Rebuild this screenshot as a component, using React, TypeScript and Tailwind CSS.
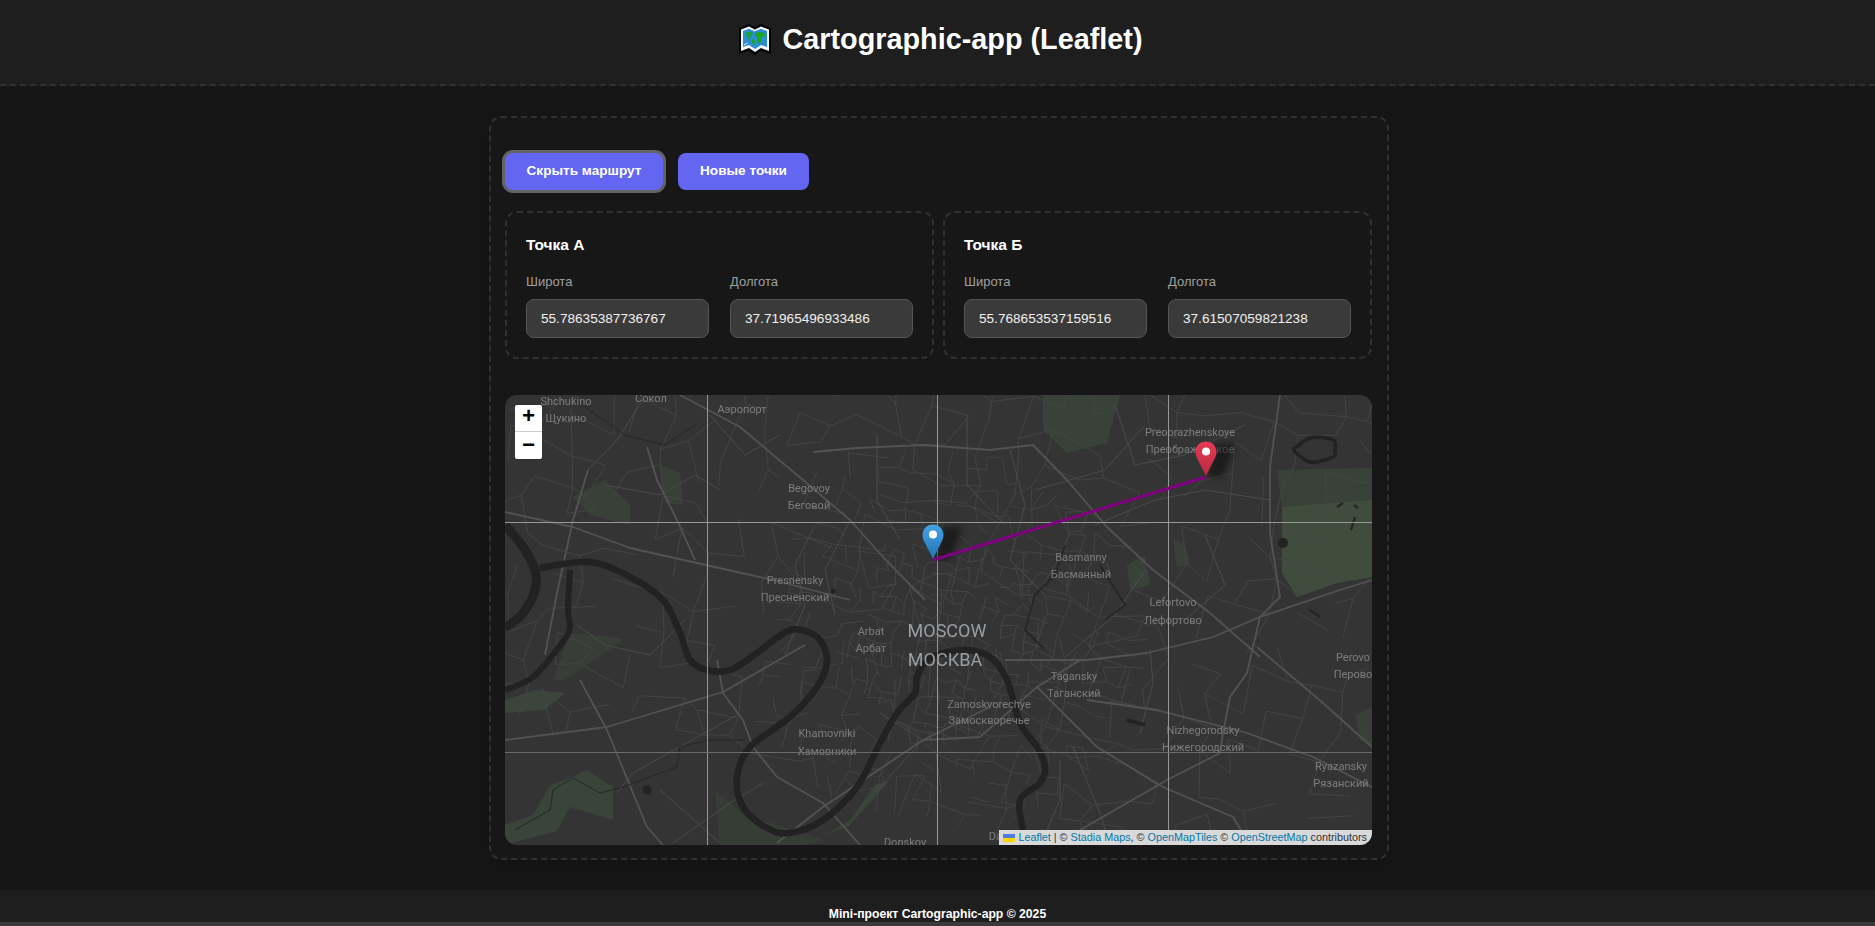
import { useState } from 'react';

// deterministic street filler so the map texture stays the same on every render
function makeRandom(seed: number) {
  let s = seed;
  return () => {
    s = (s * 16807) % 2147483647;
    return s / 2147483647;
  };
}

// jittered lattice, keeps only the edges that pass the filter
function buildLattice(seed: number, cell: number, chance: number, keep: (x: number, y: number) => boolean) {
  const rnd = makeRandom(seed);
  const cols = Math.ceil(900 / cell);
  const rows = Math.ceil(520 / cell);
  const pts: [number, number][][] = [];
  for (let i = 0; i < cols; i++) {
    pts[i] = [];
    for (let j = 0; j < rows; j++) {
      const x = i * cell + (rnd() - 0.5) * cell * 0.7 - j * cell * 0.22;
      const y = j * cell + (rnd() - 0.5) * cell * 0.7 + i * cell * 0.24 - 200;
      pts[i][j] = [x + 60, y];
    }
  }
  let d = '';
  for (let i = 0; i < cols - 1; i++) {
    for (let j = 0; j < rows - 1; j++) {
      const [x, y] = pts[i][j];
      if (!keep(x, y)) continue;
      if (rnd() < chance) d += `M${x.toFixed(1)} ${y.toFixed(1)}L${pts[i + 1][j][0].toFixed(1)} ${pts[i + 1][j][1].toFixed(1)}`;
      if (rnd() < chance) d += `M${x.toFixed(1)} ${y.toFixed(1)}L${pts[i][j + 1][0].toFixed(1)} ${pts[i][j + 1][1].toFixed(1)}`;
    }
  }
  return d;
}

const near = (x: number, y: number, r: number) => Math.hypot(x - 440, y - 240) < r;

const sideStreets = buildLattice(917, 30, 0.5, () => true);
const cityStreets = buildLattice(4242, 11, 0.55, (x, y) => near(x, y, 100));
const midStreets = buildLattice(77, 17, 0.45, (x, y) => near(x, y, 190) && !near(x, y, 95));

// catmull-rom through the points, used for the rivers
function smooth(points: number[][]) {
  let d = `M${points[0][0]} ${points[0][1]}`;
  for (let i = 0; i < points.length - 1; i++) {
    const p0 = points[Math.max(i - 1, 0)];
    const p1 = points[i];
    const p2 = points[i + 1];
    const p3 = points[Math.min(i + 2, points.length - 1)];
    const c1x = p1[0] + (p2[0] - p0[0]) / 6;
    const c1y = p1[1] + (p2[1] - p0[1]) / 6;
    const c2x = p2[0] - (p3[0] - p1[0]) / 6;
    const c2y = p2[1] - (p3[1] - p1[1]) / 6;
    d += `C${c1x.toFixed(1)} ${c1y.toFixed(1)} ${c2x.toFixed(1)} ${c2y.toFixed(1)} ${p2[0]} ${p2[1]}`;
  }
  return d;
}

const moskva = smooth([
  [35, 173], [85, 167], [125, 182], [158, 205], [175, 238], [185, 265], [202, 275], [225, 275], [252, 258], [285, 235],
  [312, 242], [322, 265], [312, 292], [285, 322], [245, 352], [232, 382], [238, 412], [262, 433], [285, 438], [318, 425],
  [352, 392], [375, 348], [392, 318], [410, 298], [412, 282], [425, 263], [458, 255], [485, 262], [502, 285], [515, 328],
  [532, 352], [540, 372], [535, 388], [515, 405], [518, 435], [522, 455],
]);
const westBend = smooth([[0, 130], [18, 152], [30, 175], [30, 195], [18, 218], [0, 233]]);
const westChannel = smooth([[65, 175], [63, 215], [65, 232], [57, 248], [28, 282], [0, 295]]);
const lake = smooth([[788, 55], [805, 43], [828, 45], [830, 55], [828, 62], [805, 67], [788, 55]]);

const majorRoads = [
  'M175 0L235 32L298 85L345 125L378 162L420 205',
  'M0 117L68 132L125 153L232 177L268 185L345 205',
  'M308 57L352 53L418 50L485 55L528 50L562 85L602 132L648 175L705 218L755 262',
  'M500 265L582 265L642 258L708 242L755 222L835 195L867 185',
  'M775 0L765 72L765 138L775 202L755 222L742 278L725 302L718 338L715 358',
  'M0 345L102 332L198 303L218 297L300 250',
  'M75 285L102 335L142 432L158 450',
  'M212 265L218 298L238 325L248 352L272 382L318 408L355 450',
  'M418 345L475 342L532 292L575 265',
  'M532 292L592 352L658 392L728 422L745 450',
  'M582 305L652 315L742 338L808 362L867 392',
  'M575 435L662 385L715 358',
  'M752 252L818 308L867 352',
  'M272 448L318 412L418 345L485 312',
  'M83 75L68 125L52 198L40 260',
  'M142 52L152 85L172 125L190 165',
];

const minorRoads = [
  'M83 75L112 45L138 5',
  'M100 90L155 100L190 80L215 95',
  'M205 20L240 60L275 40',
  'M310 130L290 170L300 210L280 260',
  'M345 125L320 175L330 220',
  'M372 40L372 105L395 145',
  'M462 20L462 90L500 130',
  'M505 55L520 110L505 165L540 200',
  'M530 95L600 75L640 30',
  'M610 10L630 70L680 60L740 30',
  'M590 130L650 105L700 95L765 105',
  'M640 175L610 220L560 262',
  'M700 140L720 190L680 225',
  'M645 255L648 288L635 338',
  'M555 365L555 405L542 435',
  'M568 352L595 418L605 450',
  'M375 318L418 345L375 392',
  'M112 398L128 378L232 320',
  'M155 395L215 448',
  'M168 448L225 408L258 388',
  'M180 225L145 260L100 250L72 230',
];

function MapIcon() {
  return (
    <svg viewBox="0 0 32 31" className="h-[31px] w-[32px] shrink-0">
      <path d="M0 4L10 0L16 3L22 0L32 4V30L22 27L16 31L10 27L0 30Z" fill="#050505" />
      <path d="M2 5.5L10 2.5L16 5.5L22 2.5L30 5.5V27L22 24L16 28L10 24L2 27Z" fill="#f4f8fb" />
      <path d="M4 7L10 4.8L15.5 7.5L22 4.8L28 7V23L22 21L16 25L10 21L4 23Z" fill="#2e8bd6" />
      <path d="M7 8.5L13 7.5L13.5 11.5L10.5 13L11.5 18L8 13ZM16 8.5L25 8L26 12L22 14L22.5 18L19.5 20L18 13.5L16 12ZM13 15.5L16 15.5L15.5 21L13 19.5Z" fill="#17a52c" />
      <path d="M5 21L8.5 19" stroke="#dff1fb" strokeWidth="1" />
    </svg>
  );
}

function Pin({ x, y, top, bottom, id }: { x: number; y: number; top: string; bottom: string; id: string }) {
  return (
    <g transform={`translate(${x} ${y})`}>
      <defs>
        <linearGradient id={id} x1="0" y1="0" x2="0" y2="1">
          <stop offset="0" stopColor={top} />
          <stop offset="1" stopColor={bottom} />
        </linearGradient>
      </defs>
      <path d="M11 .5C5 .5 .5 5.2 .5 11c0 2.6.9 5 2.4 7.8L11 35l8.1-16.2c1.5-2.8 2.4-5.2 2.4-7.8C21.5 5.2 17 .5 11 .5z" fill={`url(#${id})`} />
      <circle cx="11" cy="10.5" r="4" fill="#fff" />
    </g>
  );
}

type MapLabel = { x: number; y: number; text: string };

const labels: MapLabel[] = [
  { x: 61, y: 10, text: 'Shchukino' },
  { x: 61, y: 27, text: 'Щукино' },
  { x: 146, y: 7, text: 'Сокол' },
  { x: 237, y: 18, text: 'Аэропорт' },
  { x: 304, y: 97, text: 'Begovoy' },
  { x: 304, y: 114, text: 'Беговой' },
  { x: 290, y: 189, text: 'Presnensky' },
  { x: 290, y: 206, text: 'Пресненский' },
  { x: 366, y: 240, text: 'Arbat' },
  { x: 366, y: 257, text: 'Арбат' },
  { x: 685, y: 41, text: 'Preobrazhenskoye' },
  { x: 685, y: 58, text: 'Преображенское' },
  { x: 576, y: 166, text: 'Basmanny' },
  { x: 576, y: 183, text: 'Басманный' },
  { x: 668, y: 211, text: 'Lefortovo' },
  { x: 668, y: 229, text: 'Лефортово' },
  { x: 848, y: 266, text: 'Perovo' },
  { x: 848, y: 283, text: 'Перово' },
  { x: 569, y: 285, text: 'Tagansky' },
  { x: 569, y: 302, text: 'Таганский' },
  { x: 484, y: 313, text: 'Zamoskvorechye' },
  { x: 484, y: 329, text: 'Замоскворечье' },
  { x: 322, y: 342, text: 'Khamovniki' },
  { x: 322, y: 360, text: 'Хамовники' },
  { x: 698, y: 339, text: 'Nizhegorodsky' },
  { x: 698, y: 356, text: 'Нижегородский' },
  { x: 836, y: 375, text: 'Ryazansky' },
  { x: 836, y: 392, text: 'Рязанский' },
  { x: 400, y: 451, text: 'Donskoy' },
  { x: 510, y: 445, text: 'Danilovsky' },
];

function MapCanvas() {
  return (
    <svg viewBox="0 0 867 450" className="block h-full w-full font-['Roboto']">
      <defs>
        <filter id="soft" x="-20%" y="-20%" width="140%" height="140%">
          <feGaussianBlur stdDeviation="0.35" />
        </filter>
        <filter id="pinShadow" x="-50%" y="-50%" width="200%" height="200%">
          <feGaussianBlur stdDeviation="3" />
        </filter>
      </defs>
      <rect width="867" height="450" fill="#343434" />

      <g filter="url(#soft)">
        {/* parks */}
        <path d="M772 75L867 73V105L777 112Z" fill="#394239" />
        <path d="M777 112L825 108L867 105V182L832 188L792 202L777 178Z" fill="#414e3e" />
        <path d="M538 0H615L602 48L562 58L538 35Z" fill="#394239" />
        <path d="M48 285L65 238L108 242L118 245L60 285Z" fill="#373e37" />
        <path d="M0 305L30 295L60 298L40 315L0 318Z" fill="#3a453a" />
        <path d="M28 420L45 390L68 382L82 375L108 392L108 425L65 412L52 436L0 450V430Z" fill="#394439" />
        <path d="M68 102L100 85L125 110L125 130L85 120Z" fill="#384038" />
        <path d="M155 70L175 78L178 110L160 108Z" fill="#384038" />
        <path d="M210 395L240 420L320 445L300 450H215Z" fill="#363c36" />
        <path d="M370 390L345 425L320 440L345 430L385 385Z" fill="#394439" />
        <path d="M622 170L640 160L645 190L625 195Z" fill="#394239" />
        <path d="M668 145L680 148L685 170L672 172Z" fill="#384038" />
        <path d="M850 320L867 312V350L855 345Z" fill="#384038" />

        {/* street network */}
        <path d={sideStreets} fill="none" stroke="#454545" strokeWidth="0.9" />
        <path d={midStreets} fill="none" stroke="#464646" strokeWidth="0.8" />
        <path d={cityStreets} fill="none" stroke="#494949" strokeWidth="0.8" />
        {minorRoads.map((d) => (
          <path key={d} d={d} fill="none" stroke="#4b4b4b" strokeWidth="1" />
        ))}
        {majorRoads.map((d) => (
          <path key={d} d={d} fill="none" stroke="#525252" strokeWidth="1.8" strokeLinejoin="round" />
        ))}

        {/* water */}
        <path d={westBend} fill="none" stroke="#212121" strokeWidth="9" />
        <path d={westChannel} fill="none" stroke="#222" strokeWidth="6" />
        <path d={moskva} fill="none" stroke="#212121" strokeWidth="6.5" strokeLinejoin="round" />
        <path d={lake} fill="none" stroke="#202020" strokeWidth="3.5" />
        <path d="M540 255L520 235L530 200L550 180L560 150" fill="none" stroke="#262626" strokeWidth="1.8" />
        <path d="M595 170L620 210L600 225" fill="none" stroke="#262626" strokeWidth="1.8" />
        <path d="M70 5L120 40L160 50L190 30" fill="none" stroke="#262626" strokeWidth="1" />
        <path d="M622 325L640 330" fill="none" stroke="#222" strokeWidth="3.5" />
        <path d="M10 435L45 415L48 395L68 383L95 398L118 392L172 372L175 352L205 345L240 345" fill="none" stroke="#262626" strokeWidth="1" />
        <circle cx="778" cy="148" r="5" fill="#222" />
        <circle cx="142" cy="395" r="4.5" fill="#222" />
        <circle cx="328" cy="196" r="2.5" fill="#222" />
        <path d="M832 112L838 108M849 110L853 113M846 135L850 122" stroke="#252525" strokeWidth="2.5" />
        <path d="M805 215L815 222" stroke="#262626" strokeWidth="2.5" />
      </g>

      {/* labels */}
      <g fill="#7d7d7d" fontSize="11" textAnchor="middle" filter="url(#soft)">
        {labels.map((l) => (
          <text key={l.text} x={l.x} y={l.y}>
            {l.text}
          </text>
        ))}
        <text x="442" y="242" fontSize="18" fill="#999ea3">MOSCOW</text>
        <text x="440" y="271" fontSize="18" fill="#999ea3">МОСКВА</text>
      </g>

      {/* tile seams */}
      <g fill="#979797">
        <rect x="202" y="0" width="1" height="450" />
        <rect x="432" y="0" width="1" height="450" />
        <rect x="663" y="0" width="1" height="450" />
        <rect x="0" y="127" width="867" height="1" />
        <rect x="0" y="357" width="867" height="1" fill="#6b6b6b" />
      </g>

      {/* marker shadows */}
      <path d="M428 165L438 132L458 132L445 165Z" fill="#000" opacity="0.45" filter="url(#pinShadow)" />
      <path d="M701 82L711 49L731 49L718 82Z" fill="#000" opacity="0.45" filter="url(#pinShadow)" />

      {/* route */}
      <path d="M428 165L701 82" fill="none" stroke="#800080" strokeWidth="3" />

      <Pin x={417} y={129} top="#45a4e4" bottom="#2273b6" id="pinBlue" />
      <Pin x={690} y={46} top="#ea3a55" bottom="#b52b40" id="pinRed" />
    </svg>
  );
}

function CoordField({ label, value }: { label: string; value: string }) {
  const [current, setCurrent] = useState(value);
  return (
    <div>
      <label className="block text-[13px] leading-4 text-[#a0a0a0]">{label}</label>
      <input
        value={current}
        onChange={(e) => setCurrent(e.target.value)}
        className="mt-[9px] block h-[39px] w-full rounded-lg border border-[#555] bg-[#3a3a3a] px-[14px] text-[13.6px] text-[#f0f0f0] outline-none"
      />
    </div>
  );
}

function PointPanel({ title, lat, lng }: { title: string; lat: string; lng: string }) {
  return (
    <div className="h-[148px] rounded-xl border-2 border-dashed border-[#303030] px-[19px] pt-[22px]">
      <h3 className="text-[15.5px] leading-5 font-bold text-white">{title}</h3>
      <div className="mt-[19px] grid grid-cols-2 gap-[21px]">
        <CoordField label="Широта" value={lat} />
        <CoordField label="Долгота" value={lng} />
      </div>
    </div>
  );
}

function Attribution() {
  return (
    <div className="absolute right-0 bottom-0 flex h-[15px] items-center whitespace-nowrap bg-[#d9d9d9] pr-[5px] pl-[4px] text-[10.8px] text-[#333]">
      <svg viewBox="0 0 12 8" className="mr-[3px] h-2 w-3">
        <rect width="12" height="4" fill="#4C7BE1" />
        <rect y="4" width="12" height="4" fill="#FFD500" />
      </svg>
      <a className="text-[#0078A8]">Leaflet</a>
      <span className="mx-[3px]">|</span>
      <span>©&nbsp;</span>
      <a className="text-[#0078A8]">Stadia Maps</a>
      <span>,&nbsp;©&nbsp;</span>
      <a className="text-[#0078A8]">OpenMapTiles</a>
      <span>&nbsp;©&nbsp;</span>
      <a className="text-[#0078A8]">OpenStreetMap</a>
      <span>&nbsp;contributors</span>
    </div>
  );
}

function ZoomControl() {
  return (
    <div className="absolute top-[10px] left-[10px] flex w-[27px] flex-col overflow-hidden rounded-[2px] bg-white font-['Liberation_Mono'] text-black">
      <button className="flex h-[27px] items-center justify-center border-b border-[#ccc] text-[22px] leading-none font-bold">+</button>
      <button className="flex h-[27px] items-center justify-center pt-[2px] text-[22px] leading-none font-bold">−</button>
    </div>
  );
}

export default function App() {
  return (
    <div className="flex h-[926px] flex-col overflow-hidden bg-[#161616] font-['Liberation_Sans',Arial,sans-serif] text-white">
      <header className="flex h-[86px] shrink-0 items-center justify-center gap-3 border-b-2 border-dashed border-[#303030] bg-[#1e1e1e] pb-[5px] pl-[6px]">
        <MapIcon />
        <h1 className="text-[28.8px] leading-none font-bold">Cartographic-app (Leaflet)</h1>
      </header>

      <main className="mt-[30px] ml-[489px] h-[744px] w-[900px] shrink-0 rounded-xl border-2 border-dashed border-[#303030] bg-[#171717] pt-[35px] pr-[15px] pl-[14px] shadow-[0_4px_12px_rgba(0,0,0,0.2)]">
        <div className="flex h-[37px] gap-[15px]">
          <button className="h-[37px] w-[158px] rounded-lg bg-[#6366f1] text-[13.6px] font-bold text-white ring-[3px] ring-[#636363]">
            Скрыть маршрут
          </button>
          <button className="h-[37px] w-[131px] rounded-lg bg-[#6366f1] text-[13.6px] font-bold text-white">
            Новые точки
          </button>
        </div>

        <div className="mt-[21px] grid grid-cols-2 gap-[9px]">
          <PointPanel title="Точка А" lat="55.78635387736767" lng="37.71965496933486" />
          <PointPanel title="Точка Б" lat="55.768653537159516" lng="37.61507059821238" />
        </div>

        <div className="relative mt-[36px] h-[450px] w-[867px] overflow-hidden rounded-xl">
          <MapCanvas />
          <ZoomControl />
          <Attribution />
        </div>
      </main>

      <footer className="mt-[30px] h-[32px] shrink-0 bg-[#1e1e1e] pt-[17px] text-center text-[12.2px] leading-[14px] font-bold">
        Mini-проект Cartographic-app © 2025
      </footer>
      <div className="flex-1 bg-[#3a3a3a]" />
    </div>
  );
}
